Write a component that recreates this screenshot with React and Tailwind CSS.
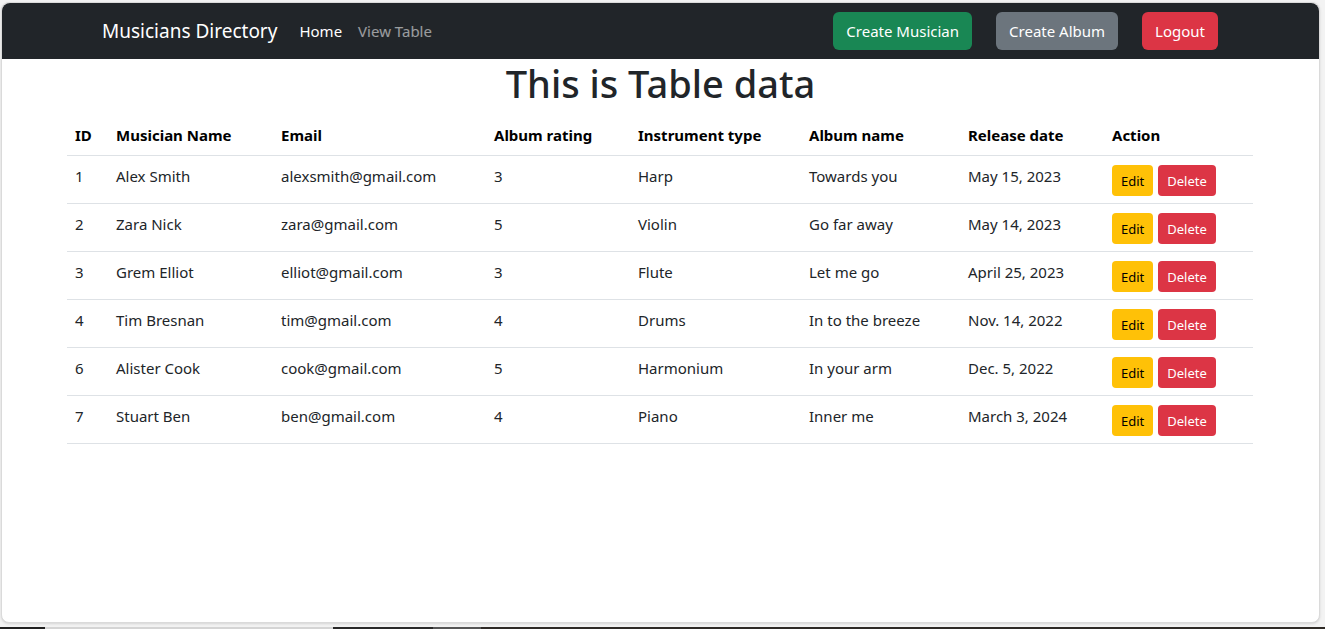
const musicians = [
  { id: 1, name: "Alex Smith", email: "alexsmith@gmail.com", rating: 3, instrument: "Harp", album: "Towards you", date: "May 15, 2023" },
  { id: 2, name: "Zara Nick", email: "zara@gmail.com", rating: 5, instrument: "Violin", album: "Go far away", date: "May 14, 2023" },
  { id: 3, name: "Grem Elliot", email: "elliot@gmail.com", rating: 3, instrument: "Flute", album: "Let me go", date: "April 25, 2023" },
  { id: 4, name: "Tim Bresnan", email: "tim@gmail.com", rating: 4, instrument: "Drums", album: "In to the breeze", date: "Nov. 14, 2022" },
  { id: 6, name: "Alister Cook", email: "cook@gmail.com", rating: 5, instrument: "Harmonium", album: "In your arm", date: "Dec. 5, 2022" },
  { id: 7, name: "Stuart Ben", email: "ben@gmail.com", rating: 4, instrument: "Piano", album: "Inner me", date: "March 3, 2024" },
];

const headers = [
  ["ID", "w-[41px]"],
  ["Musician Name", "w-[165px]"],
  ["Email", "w-[213px]"],
  ["Album rating", "w-[144px]"],
  ["Instrument type", "w-[171px]"],
  ["Album name", "w-[159px]"],
  ["Release date", "w-[144px]"],
  ["Action", ""],
];

function Navbar() {
  return (
    <nav className="h-14 bg-[#212529] rounded-t-lg flex items-center pl-[100px] pr-[101px]">
      <span className="text-[19px] text-white mr-[14px]">Musicians Directory</span>
      <a className="text-white px-2">Home</a>
      <a className="text-white/55 px-2">View Table</a>

      <div className="ml-auto flex gap-6">
        <button className="h-[38px] px-[13px] rounded-md bg-[#198754] text-white">Create Musician</button>
        <button className="h-[38px] px-[13px] rounded-md bg-[#6c757d] text-white">Create Album</button>
        <button className="h-[38px] px-[13px] rounded-md bg-[#dc3545] text-white">Logout</button>
      </div>
    </nav>
  );
}

export default function App() {
  return (
    <div
      className="h-[629px] bg-[#f3f3f3] flex flex-col overflow-hidden text-[15px] leading-6 text-[#212529]"
      style={{ fontFamily: '"Noto Sans", "Open Sans", sans-serif' }}
    >
      <div className="mt-[2px] ml-px w-[1319px] h-[621px] bg-white rounded-lg border border-[#dadada] shadow-sm">
        <Navbar />

        <h1 className="text-[38px] font-medium leading-[48px] text-center mb-2">This is Table data</h1>

        <div className="pl-[65px] pr-[66px]">
          <table className="w-full border-collapse text-left">
            <thead>
              <tr className="border-b border-[#dee2e6]">
                {headers.map(([h, w]) => (
                  <th key={h} className={`${w} p-2 font-bold text-black align-top`}>{h}</th>
                ))}
              </tr>
            </thead>
            <tbody>
              {musicians.map(m => (
                <tr key={m.id} className="border-b border-[#dee2e6]">
                  <td className="p-2 align-top">{m.id}</td>
                  <td className="p-2 align-top">{m.name}</td>
                  <td className="p-2 align-top">{m.email}</td>
                  <td className="p-2 align-top">{m.rating}</td>
                  <td className="p-2 align-top">{m.instrument}</td>
                  <td className="p-2 align-top">{m.album}</td>
                  <td className="p-2 align-top">{m.date}</td>
                  <td className="px-2 pt-[9px] pb-[7px] align-top">
                    <div className="flex gap-[5px]">
                      <button className="h-[31px] px-[9px] rounded bg-[#ffc107] text-black text-[13px]">Edit</button>
                      <button className="h-[31px] px-[9px] rounded bg-[#dc3545] text-white text-[13px]">Delete</button>
                    </div>
                  </td>
                </tr>
              ))}
            </tbody>
          </table>
        </div>
      </div>

      <div className="mt-auto h-[2px] flex">
        <div className="w-[45px] bg-[#202020]" />
        <div className="w-[288px] bg-[#d4d4d4]" />
        <div className="w-[100px] bg-[#282828]" />
        <div className="w-[48px] bg-[#555]" />
        <div className="flex-1 bg-[#2e2a26]" />
      </div>
    </div>
  );
}
